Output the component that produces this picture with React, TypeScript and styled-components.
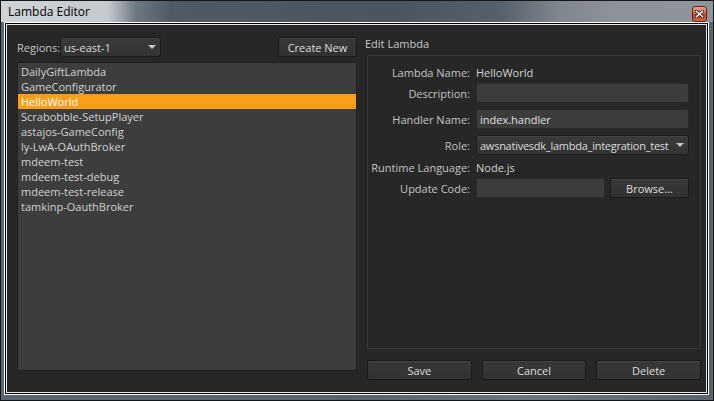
import React from "react";
import styled, { createGlobalStyle } from "styled-components";

const FONT = `"Open Sans", "Noto Sans", sans-serif`;

const Global = createGlobalStyle`
  html, body { margin: 0; padding: 0; background: #000; }
  body { font-family: ${FONT}; }
`;

const Window = styled.div`
  width: 714px;
  height: 401px;
  box-sizing: border-box;
  border: 1px solid #14181c;
  display: flex;
  flex-direction: column;
  background: linear-gradient(90deg, #5b656e 0%, #59636c 50%, #6c757c 75%, #5a646c 100%);
  font-family: ${FONT};
`;

const TitleBar = styled.div`
  height: 21px;
  flex: none;
  display: flex;
  align-items: center;
  padding: 0 6px 0 7px;
  background: linear-gradient(
    90deg,
    #cfd3d6 0%,
    #c6cace 15%,
    #6d7780 19%,
    #4f5a64 24%,
    #4a555f 55%,
    #56606a 70%,
    #7e858c 78%,
    #8c9297 86%,
    #8e9499 100%
  );
`;

const Title = styled.span`
  flex: 1;
  font-size: 12px;
  color: #000;
`;

const CloseButton = styled.div`
  width: 15px;
  height: 16px;
  box-sizing: border-box;
  margin-top: 4px;
  border: 1px solid #5a2a20;
  border-radius: 3px;
  background: linear-gradient(180deg, #f0a08a 0%, #d8664a 45%, #c4452a 55%, #d06040 100%);
  display: flex;
  align-items: center;
  justify-content: center;
`;

const Frame = styled.div`
  flex: 1;
  display: flex;
  padding: 0 4px 5px 3px;
  min-height: 0;
`;

const ClientEdge = styled.div`
  flex: 1;
  display: flex;
  padding: 2px;
  border: 1px solid #ffffff;
  box-shadow: inset 0 0 0 1px #000000, inset 0 0 0 2px #e8e8e8;
  background: #000;
  min-width: 0;
`;

const Content = styled.div`
  flex: 1;
  min-width: 0;
  display: flex;
  gap: 10px;
  padding: 12px 5px 0 10px;
  background: #272727;
  color: #c8c8c8;
  font-size: 11px;
`;

const LeftColumn = styled.div`
  width: 340px;
  flex: none;
  display: flex;
  flex-direction: column;
  gap: 5px;
  padding-bottom: 21px;
`;

const TopRow = styled.div`
  height: 20px;
  display: flex;
  align-items: center;
`;

const RegionLabel = styled.span`
  width: 43px;
  flex: none;
  color: #c4c4c4;
  white-space: nowrap;
`;

const Value = styled.span`
  color: #d4d4d4;
  white-space: nowrap;
`;

const Select = styled.div<{ $width?: number }>`
  height: 20px;
  box-sizing: border-box;
  min-width: 0;
  ${(p) => (p.$width ? `width: ${p.$width}px; flex: none;` : "")}
  display: flex;
  align-items: center;
  padding: 0 4px 0 3px;
  border: 1px solid #1c1c1c;
  border-radius: 3px;
  background: linear-gradient(180deg, #3a3a3a 0%, #333333 100%);
  color: #dcdcdc;
  box-shadow: inset 0 1px 0 #434343;
`;

const SelectText = styled.span<{ $tight?: boolean }>`
  flex: 1;
  min-width: 0;
  margin-right: 6px;
  white-space: nowrap;
  overflow: hidden;
  letter-spacing: ${(p) => (p.$tight ? "-0.25px" : "0")};
`;

const Arrow = styled.span`
  width: 0;
  height: 0;
  flex: none;
  border-left: 4px solid transparent;
  border-right: 4px solid transparent;
  border-top: 4px solid #c8c8c8;
`;

const Button = styled.div<{ $width?: number }>`
  height: 20px;
  box-sizing: border-box;
  min-width: 0;
  ${(p) => (p.$width ? `width: ${p.$width}px; flex: none;` : "flex: 1;")}
  display: flex;
  align-items: center;
  justify-content: center;
  border: 1px solid #1a1a1a;
  border-radius: 2px;
  background: linear-gradient(180deg, #383838 0%, #323232 100%);
  box-shadow: inset 0 1px 0 #454545;
  color: #dedede;
  white-space: nowrap;
`;

const PushRight = styled.div`
  margin-left: auto;
  display: flex;
`;

const List = styled.div`
  flex: 1;
  box-sizing: border-box;
  border: 1px solid #1f1f1f;
  background: #3d3d3d;
  padding-top: 1px;
  display: flex;
  flex-direction: column;
`;

const ListItem = styled.div<{ $selected?: boolean }>`
  height: 15px;
  line-height: 15px;
  padding-left: 3px;
  white-space: nowrap;
  background: ${(p) => (p.$selected ? "#fb9e1a" : "transparent")};
  color: ${(p) => (p.$selected ? "#ffffff" : "#d2d2d2")};
`;

const RightColumn = styled.div`
  flex: 1;
  min-width: 0;
  display: flex;
  flex-direction: column;
  padding-bottom: 12px;
`;

const GroupTitle = styled.div`
  height: 18px;
  margin-left: -2px;
  line-height: 14px;
  color: #c8c8c8;
`;

const Group = styled.div`
  flex: 1;
  box-sizing: border-box;
  border: 1px solid #3a3a3a;
  border-radius: 2px;
  padding: 8px 11px 0 4px;
  display: flex;
  flex-direction: column;
`;

const FieldRow = styled.div<{ $h: number; $mt: number }>`
  display: grid;
  grid-template-columns: 98px minmax(0, 1fr);
  column-gap: 6px;
  align-items: center;
  height: ${(p) => p.$h}px;
  margin-top: ${(p) => p.$mt}px;
`;

const FieldLabel = styled.span`
  justify-self: end;
  white-space: nowrap;
  color: #c4c4c4;
`;

const Input = styled.div`
  height: 20px;
  box-sizing: border-box;
  min-width: 0;
  display: flex;
  align-items: center;
  padding: 0 3px;
  border: 1px solid #2a2a2a;
  border-radius: 2px;
  background: #3c3c3c;
  color: #e0e0e0;
  white-space: nowrap;
`;

const InputWithButton = styled.div`
  display: grid;
  grid-template-columns: 129px minmax(0, 1fr);
  column-gap: 5px;
`;

const Footer = styled.div`
  margin-top: 11px;
  display: flex;
  gap: 10px;
`;

const lambdas = [
  "DailyGiftLambda",
  "GameConfigurator",
  "HelloWorld",
  "Scrabobble-SetupPlayer",
  "astajos-GameConfig",
  "ly-LwA-OAuthBroker",
  "mdeem-test",
  "mdeem-test-debug",
  "mdeem-test-release",
  "tamkinp-OauthBroker",
];

export default function App() {
  return (
    <>
      <Global />
      <Window>
        <TitleBar>
          <Title>Lambda Editor</Title>
          <CloseButton>
            <svg width="9" height="8" viewBox="0 0 9 8">
              <path d="M1 1 L8 7 M8 1 L1 7" stroke="#3a1a14" strokeWidth="3.2" strokeLinecap="square" />
              <path d="M1.5 1.5 L7.5 6.5 M7.5 1.5 L1.5 6.5" stroke="#ffffff" strokeWidth="1.6" strokeLinecap="square" />
            </svg>
          </CloseButton>
        </TitleBar>
        <Frame>
          <ClientEdge>
            <Content>
              <LeftColumn>
                <TopRow>
                  <RegionLabel>Regions:</RegionLabel>
                  <Select $width={101}>
                    <SelectText>us-east-1</SelectText>
                    <Arrow />
                  </Select>
                  <PushRight>
                    <Button $width={79}>Create New</Button>
                  </PushRight>
                </TopRow>
                <List>
                  {lambdas.map((name) => (
                    <ListItem key={name} $selected={name === "HelloWorld"}>
                      {name}
                    </ListItem>
                  ))}
                </List>
              </LeftColumn>
              <RightColumn>
                <GroupTitle>Edit Lambda</GroupTitle>
                <Group>
                  <FieldRow $h={17} $mt={0}>
                    <FieldLabel>Lambda Name:</FieldLabel>
                    <Value>HelloWorld</Value>
                  </FieldRow>
                  <FieldRow $h={20} $mt={2}>
                    <FieldLabel>Description:</FieldLabel>
                    <Input />
                  </FieldRow>
                  <FieldRow $h={20} $mt={6}>
                    <FieldLabel>Handler Name:</FieldLabel>
                    <Input>index.handler</Input>
                  </FieldRow>
                  <FieldRow $h={20} $mt={6}>
                    <FieldLabel>Role:</FieldLabel>
                    <Select>
                      <SelectText $tight>awsnativesdk_lambda_integration_test</SelectText>
                      <Arrow />
                    </Select>
                  </FieldRow>
                  <FieldRow $h={17} $mt={4}>
                    <FieldLabel>Runtime Language:</FieldLabel>
                    <Value>Node.js</Value>
                  </FieldRow>
                  <FieldRow $h={20} $mt={2}>
                    <FieldLabel>Update Code:</FieldLabel>
                    <InputWithButton>
                      <Input />
                      <Button>Browse...</Button>
                    </InputWithButton>
                  </FieldRow>
                </Group>
                <Footer>
                  <Button>Save</Button>
                  <Button>Cancel</Button>
                  <Button>Delete</Button>
                </Footer>
              </RightColumn>
            </Content>
          </ClientEdge>
        </Frame>
      </Window>
    </>
  );
}
